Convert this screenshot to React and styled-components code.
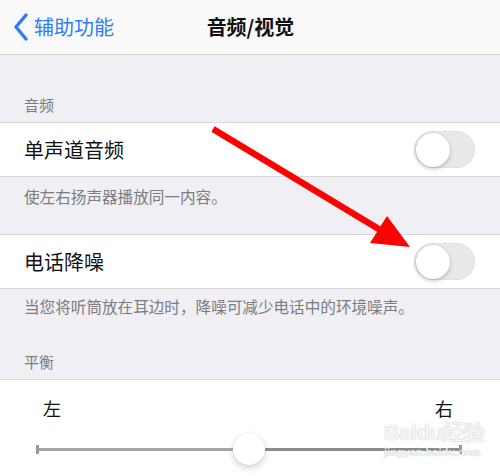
import styled, { createGlobalStyle } from "styled-components"

const Global = createGlobalStyle`
    body {
        margin: 0;
        font-family: "Noto Sans CJK SC", "Noto Sans", sans-serif;
    }
`

export default function App() {
    return (
        <Page>
            <Global />
            <Nav>
                <Back>
                    <svg width="16" height="28" viewBox="0 0 16 28">
                        <path d="M13 2 L3 14 L13 26" fill="none" stroke="#2f7cf6" strokeWidth="3.4" strokeLinecap="round" strokeLinejoin="round" />
                    </svg>
                    <span>辅助功能</span>
                </Back>
                <Title>音频/视觉</Title>
            </Nav>

            <Header height={67}>音频</Header>
            <Group>
                <Row>
                    <span>单声道音频</span>
                    <Toggle><Knob /></Toggle>
                </Row>
            </Group>
            <Footer height={57} top={9}>使左右扬声器播放同一内容。</Footer>

            <Group>
                <Row>
                    <span>电话降噪</span>
                    <Toggle><Knob /></Toggle>
                </Row>
            </Group>
            <Footer height={40} top={7}>当您将听筒放在耳边时，降噪可减少电话中的环境噪声。</Footer>
            <Header height={50}>平衡</Header>

            <Balance>
                <Labels>
                    <span>左</span>
                    <span>右</span>
                </Labels>
                <Slider>
                    <Track side="left" />
                    <Thumb />
                    <Track side="right" />
                </Slider>
            </Balance>

            <Watermark>
                <b>Bai<i>du</i>经验</b>
                <small>jingyan.baidu.com</small>
            </Watermark>

            <Arrow width="500" height="476" viewBox="0 0 500 476">
                <line x1="213" y1="129" x2="382" y2="231" stroke="#ff0000" strokeWidth="6.5" />
                <polygon points="410,247 387,216 370,243" fill="#ff0000" />
            </Arrow>
        </Page>
    )
}

const Page = styled.div`
    position: relative;
    width: 500px;
    height: 476px;
    overflow: hidden;
    background-color: #efeff4;
    display: flex;
    flex-direction: column;
`
const Nav = styled.div`
    height: 53px;
    flex-shrink: 0;
    background-color: #f9f9f9;
    border-bottom: 1px solid #d3d3d6;
    display: flex;
    align-items: center;
    position: relative;
    padding-bottom: 1px;
    box-sizing: content-box;
`
const Back = styled.div`
    display: flex;
    align-items: center;
    gap: 5px;
    padding-left: 13px;
    color: #2f7cf6;
    font-size: 20px;

    svg {
        margin-top: 1px;
    }
`
const Title = styled.div`
    position: absolute;
    left: 0;
    right: 0;
    text-align: center;
    font-size: 20px;
    font-weight: 700;
    color: #111;
    padding-left: 1px;
`
const Header = styled.div`
    height: ${(p) => p.height}px;
    flex-shrink: 0;
    box-sizing: border-box;
    display: flex;
    align-items: flex-end;
    padding: 0 24px 8px;
    font-size: 15px;
    line-height: 18px;
    color: #7b7b80;
`
const Group = styled.div`
    flex-shrink: 0;
    background-color: white;
    border-top: 1px solid #d8d8dc;
    border-bottom: 1px solid #d8d8dc;
`
const Row = styled.div`
    height: 53px;
    display: flex;
    align-items: center;
    justify-content: space-between;
    padding: 0 25px 0 24px;
    font-size: 20px;
    color: #111;
`
const Toggle = styled.div`
    width: 61px;
    height: 37px;
    border-radius: 19px;
    background-color: #e9e9eb;
    box-shadow: inset 0 0 0 1px #e2e2e4;
    display: flex;
    align-items: center;
    padding: 0 2px;
    box-sizing: border-box;
`
const Knob = styled.div`
    width: 34px;
    height: 34px;
    border-radius: 50%;
    background-color: white;
    box-shadow: 0 2px 4px rgba(0, 0, 0, 0.2), 0 0 0 0.5px rgba(0, 0, 0, 0.08);
`
const Footer = styled.div`
    height: ${(p) => p.height}px;
    flex-shrink: 0;
    box-sizing: border-box;
    padding: ${(p) => p.top}px 24px 0;
    font-size: 15.6px;
    line-height: 20px;
    color: #7b7b80;
    white-space: nowrap;
`
const Balance = styled.div`
    flex: 1;
    background-color: white;
    border-top: 1px solid #d8d8dc;
`
const Labels = styled.div`
    display: flex;
    justify-content: space-between;
    padding: 18px 47px 0 43px;
    font-size: 18px;
    line-height: 20px;
    color: #111;
`
const Slider = styled.div`
    display: flex;
    align-items: center;
    height: 32px;
    margin: 15px 38px 0 36px;
`
const Track = styled.div`
    flex: 1;
    height: 3px;
    background-color: ${(p) => (p.side === "left" ? "#a4a4a6" : "#8c8c8e")};
    position: relative;

    &::before {
        content: "";
        position: absolute;
        ${(p) => (p.side === "left" ? "left: 0;" : "right: 0;")}
        top: -3px;
        width: 3px;
        height: 9px;
        background-color: #9a9a9c;
    }
`
const Thumb = styled.div`
    width: 32px;
    height: 32px;
    border-radius: 50%;
    background-color: white;
    box-shadow: 0 3px 7px rgba(0, 0, 0, 0.18), 0 0 0 0.5px rgba(0, 0, 0, 0.06);
    flex-shrink: 0;
`
const Watermark = styled.div`
    position: absolute;
    left: 384px;
    top: 420px;
    display: flex;
    flex-direction: column;
    font-family: "Liberation Sans", sans-serif;
    color: rgba(255, 255, 255, 0.9);
    text-shadow: 0 0 1px rgba(0, 0, 0, 0.35);
    pointer-events: none;

    b {
        font-size: 22px;
        line-height: 26px;
        font-weight: 700;
        letter-spacing: -0.5px;
    }

    i {
        font-style: normal;
    }

    small {
        font-size: 11px;
        line-height: 13px;
        font-weight: 700;
    }
`
const Arrow = styled.svg`
    position: absolute;
    left: 0;
    top: 0;
    pointer-events: none;
`
